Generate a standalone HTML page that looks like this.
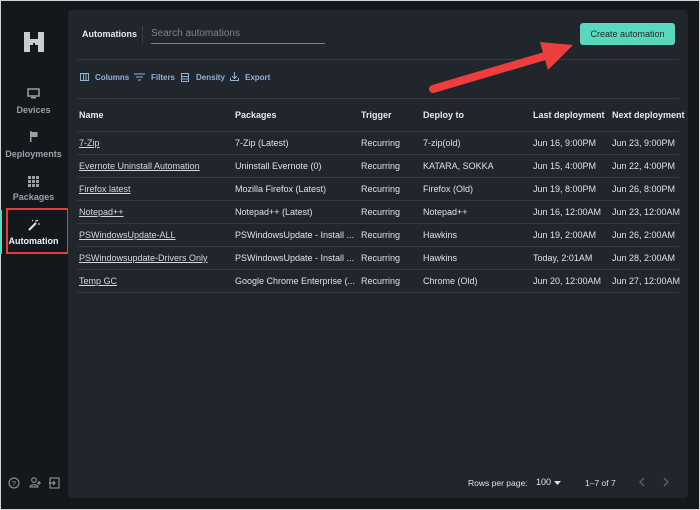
<!DOCTYPE html>
<html><head><meta charset="utf-8"><style>
*{margin:0;padding:0;box-sizing:border-box}
body{width:700px;height:510px;background:#13181d;font-family:"Liberation Sans",sans-serif;position:relative;overflow:hidden;box-shadow:inset 0 0 0 1px #cfd2d6}
.side{position:absolute;left:0;top:0;width:67px;height:510px}
.nav{position:absolute;left:0;width:67px;text-align:center;color:#9aa0a6;font-size:9px;font-weight:bold}
.panel{position:absolute;left:68px;top:10px;width:620px;height:488px;background:#21262c;border-radius:4px}
.t{position:absolute;font-size:9px;color:#dfe2e5;white-space:nowrap}
.hd{font-weight:bold;color:#e6e8ea}
.u{text-decoration:underline;color:#d5d8db}
.line{position:absolute;left:9px;width:602px;height:1px;background:#33393f}
.tb{position:absolute;top:63px;font-size:8px;font-weight:bold;color:#8fb2d8}
</style></head><body>
<div class="side">
 <svg style="position:absolute;left:24px;top:32px" width="20" height="20" viewBox="0 0 20 20"><path fill="#c9cdd1" d="M0 0h6v7h8V0h6v20h-6v-7h-3v-2H9v2H6v7H0z"/></svg>
 <svg style="position:absolute;left:27px;top:88px" width="13" height="11" viewBox="0 0 13 11"><rect x="1" y="1" width="11" height="7" fill="none" stroke="#9aa0a6" stroke-width="1.5"/><rect x="4" y="9" width="5" height="1.5" fill="#9aa0a6"/></svg>
 <div class="nav" style="top:105px">Devices</div>
 <svg style="position:absolute;left:29px;top:131px" width="10" height="11"><path d="M1 0v11h1.5V6h6V1h-6V0z" fill="#9aa0a6"/></svg>
 <div class="nav" style="top:149px">Deployments</div>
 <svg style="position:absolute;left:28px;top:176px" width="11" height="11"><g fill="#9aa0a6"><rect x="0" y="0" width="3" height="3"/><rect x="4" y="0" width="3" height="3"/><rect x="8" y="0" width="3" height="3"/><rect x="0" y="4" width="3" height="3"/><rect x="4" y="4" width="3" height="3"/><rect x="8" y="4" width="3" height="3"/><rect x="0" y="8" width="3" height="3"/><rect x="4" y="8" width="3" height="3"/><rect x="8" y="8" width="3" height="3"/></g></svg>
 <div class="nav" style="top:192px">Packages</div>
 <div style="position:absolute;left:0;top:210px;width:2px;height:44px;background:#5ed9bf"></div>
 <div style="position:absolute;left:6px;top:208px;width:63px;height:46px;border:2px solid #e83a3a"></div>
 <svg style="position:absolute;left:27px;top:219px" width="13" height="13"><path d="M2 11l7-7" stroke="#e6e8ea" stroke-width="2"/><path d="M9 1v2M11 5h2M5 1l1 1M11 1l-1 1" stroke="#e6e8ea" stroke-width="1"/></svg>
 <div class="nav" style="top:236px;color:#f0f2f4">Automation</div>
 <svg style="position:absolute;left:8px;top:477px" width="12" height="12"><circle cx="6" cy="6" r="5" fill="none" stroke="#9aa0a6"/><text x="4" y="9" font-size="7" fill="#9aa0a6" font-family="Liberation Sans">?</text></svg>
 <svg style="position:absolute;left:29px;top:477px" width="13" height="11"><circle cx="5" cy="3" r="2.3" fill="none" stroke="#9aa0a6"/><path d="M1 10c0-3 8-3 8 0z" fill="none" stroke="#9aa0a6"/><path d="M10 4v4M8 6h4" stroke="#9aa0a6"/></svg>
 <svg style="position:absolute;left:49px;top:477px" width="11" height="12"><rect x="1" y="1" width="9" height="10" fill="none" stroke="#9aa0a6"/><path d="M0 6h6M4 4l2 2-2 2" stroke="#9aa0a6" fill="none"/></svg>
</div>
<div class="panel">
 <div class="t hd" style="left:14px;top:19px;font-size:9px">Automations</div>
 <div style="position:absolute;left:74px;top:16px;width:1px;height:18px;background:#3a4047"></div>
 <div class="t" style="left:83px;top:18px;font-size:10px;color:#7e858c">Search automations</div>
 <div style="position:absolute;left:83px;top:33px;width:174px;height:1px;background:#7e858c"></div>
 <div style="position:absolute;left:512px;top:13px;width:95px;height:22px;background:#5ad8be;border-radius:3px;color:#1b2a27;font-size:9px;text-align:center;line-height:22px">Create automation</div>
 <div class="line" style="top:49px"></div>
 <svg style="position:absolute;left:12px;top:63px" width="9" height="8"><rect x=".5" y=".5" width="8" height="7" fill="none" stroke="#8fb2d8"/><path d="M3.5 1v6M6 1v6" stroke="#8fb2d8"/></svg>
 <div class="tb" style="left:27px">Columns</div>
 <svg style="position:absolute;left:66px;top:63px" width="11" height="8"><path d="M0 1h11M2 4h7M4 7h3" stroke="#8fb2d8"/></svg>
 <div class="tb" style="left:83px">Filters</div>
 <svg style="position:absolute;left:113px;top:63px" width="8" height="9"><rect x=".5" y=".5" width="7" height="8" fill="none" stroke="#8fb2d8"/><path d="M1 3.5h6M1 6h6" stroke="#8fb2d8"/></svg>
 <div class="tb" style="left:128px">Density</div>
 <svg style="position:absolute;left:162px;top:62px" width="9" height="9"><path d="M4.5 0v6M2 4l2.5 2.5L7 4M.5 6v2.5h8V6" stroke="#8fb2d8" fill="none"/></svg>
 <div class="tb" style="left:177px">Export</div>
 <div class="line" style="top:88px"></div>
 <div class="t hd" style="left:11px;top:100px">Name</div>
 <div class="t hd" style="left:167px;top:100px">Packages</div>
 <div class="t hd" style="left:293px;top:100px">Trigger</div>
 <div class="t hd" style="left:355px;top:100px">Deploy to</div>
 <div class="t hd" style="left:465px;top:100px">Last deployment</div>
 <div class="t hd" style="left:544px;top:100px">Next deployment</div>
 <div class="line" style="top:121px"></div>
 <div class="line" style="top:144px"></div>
 <div class="line" style="top:167px"></div>
 <div class="line" style="top:190px"></div>
 <div class="line" style="top:213px"></div>
 <div class="line" style="top:236px"></div>
 <div class="line" style="top:259px"></div>
 <div class="line" style="top:282px"></div>

 <div class="t u" style="left:11px;top:128px">7-Zip</div><div class="t" style="left:167px;top:128px">7-Zip (Latest)</div><div class="t" style="left:293px;top:128px">Recurring</div><div class="t" style="left:355px;top:128px">7-zip(old)</div><div class="t" style="left:465px;top:128px">Jun 16, 9:00PM</div><div class="t" style="left:544px;top:128px">Jun 23, 9:00PM</div>
 <div class="t u" style="left:11px;top:151px">Evernote Uninstall Automation</div><div class="t" style="left:167px;top:151px">Uninstall Evernote (0)</div><div class="t" style="left:293px;top:151px">Recurring</div><div class="t" style="left:355px;top:151px">KATARA, SOKKA</div><div class="t" style="left:465px;top:151px">Jun 15, 4:00PM</div><div class="t" style="left:544px;top:151px">Jun 22, 4:00PM</div>
 <div class="t u" style="left:11px;top:174px">Firefox latest</div><div class="t" style="left:167px;top:174px">Mozilla Firefox (Latest)</div><div class="t" style="left:293px;top:174px">Recurring</div><div class="t" style="left:355px;top:174px">Firefox (Old)</div><div class="t" style="left:465px;top:174px">Jun 19, 8:00PM</div><div class="t" style="left:544px;top:174px">Jun 26, 8:00PM</div>
 <div class="t u" style="left:11px;top:197px">Notepad++</div><div class="t" style="left:167px;top:197px">Notepad++ (Latest)</div><div class="t" style="left:293px;top:197px">Recurring</div><div class="t" style="left:355px;top:197px">Notepad++</div><div class="t" style="left:465px;top:197px">Jun 16, 12:00AM</div><div class="t" style="left:544px;top:197px">Jun 23, 12:00AM</div>
 <div class="t u" style="left:11px;top:220px">PSWindowsUpdate-ALL</div><div class="t" style="left:167px;top:220px">PSWindowsUpdate - Install ...</div><div class="t" style="left:293px;top:220px">Recurring</div><div class="t" style="left:355px;top:220px">Hawkins</div><div class="t" style="left:465px;top:220px">Jun 19, 2:00AM</div><div class="t" style="left:544px;top:220px">Jun 26, 2:00AM</div>
 <div class="t u" style="left:11px;top:243px">PSWindowsupdate-Drivers Only</div><div class="t" style="left:167px;top:243px">PSWindowsUpdate - Install ...</div><div class="t" style="left:293px;top:243px">Recurring</div><div class="t" style="left:355px;top:243px">Hawkins</div><div class="t" style="left:465px;top:243px">Today, 2:01AM</div><div class="t" style="left:544px;top:243px">Jun 28, 2:00AM</div>
 <div class="t u" style="left:11px;top:266px">Temp GC</div><div class="t" style="left:167px;top:266px">Google Chrome Enterprise (...</div><div class="t" style="left:293px;top:266px">Recurring</div><div class="t" style="left:355px;top:266px">Chrome (Old)</div><div class="t" style="left:465px;top:266px">Jun 20, 12:00AM</div><div class="t" style="left:544px;top:266px">Jun 27, 12:00AM</div>

 <div class="t" style="left:400px;top:468px;font-size:8.5px">Rows per page:</div>
 <div class="t" style="left:468px;top:467px">100</div>
 <svg style="position:absolute;left:486px;top:471px" width="7" height="4"><path d="M0 0h7L3.5 4z" fill="#dfe2e5"/></svg>
 <div class="t" style="left:517px;top:468px;font-size:8.5px">1–7 of 7</div>
 <svg style="position:absolute;left:571px;top:467px" width="6" height="10"><path d="M5 1L1 5l4 4" stroke="#5c636a" fill="none" stroke-width="1.3"/></svg>
 <svg style="position:absolute;left:595px;top:467px" width="6" height="10"><path d="M1 1l4 4-4 4" stroke="#5c636a" fill="none" stroke-width="1.3"/></svg>
</div>
<svg style="position:absolute;left:0;top:0" width="700" height="510"><path d="M433 89L545 56" stroke="#ee3d3d" stroke-width="8" stroke-linecap="round"/><path d="M540 42L573 45 548 70z" fill="#ee3d3d"/></svg>
</body></html>
